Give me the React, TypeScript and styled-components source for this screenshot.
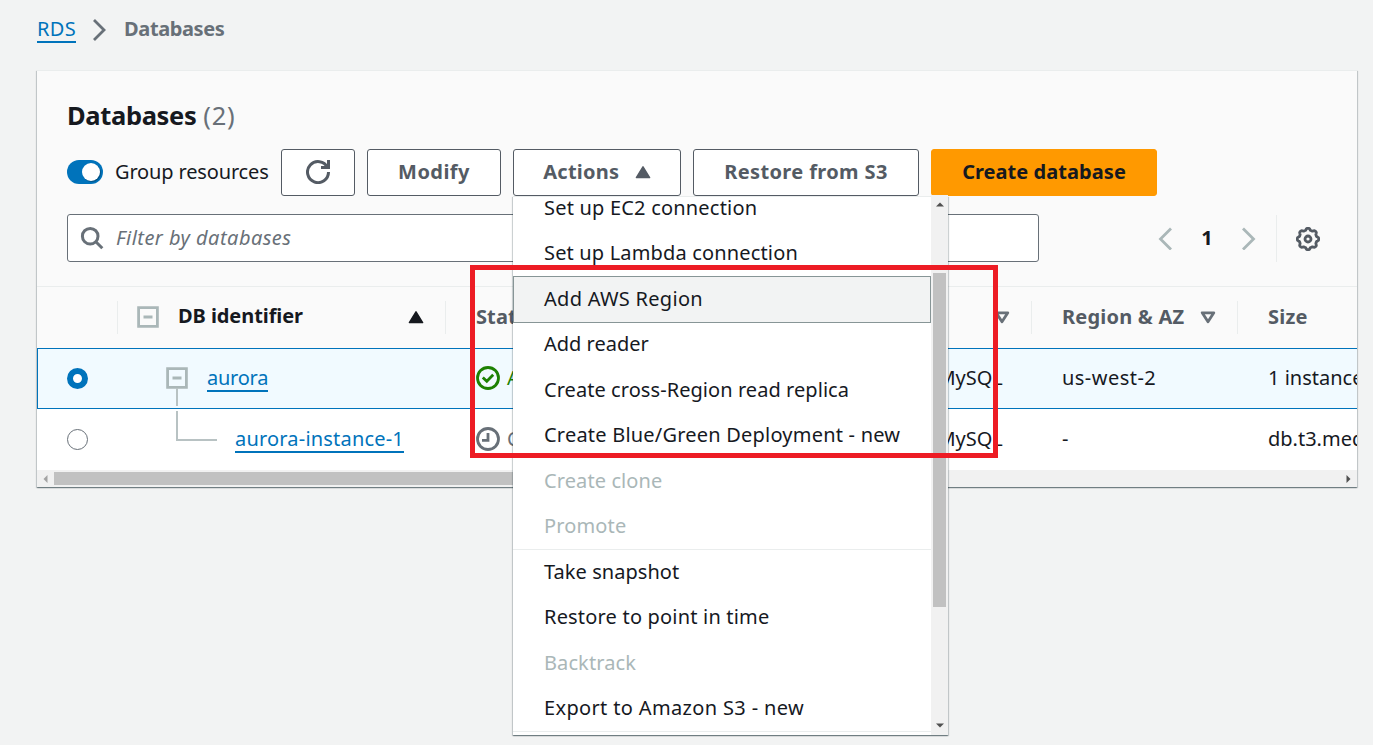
import React from "react";
import styled, { createGlobalStyle } from "styled-components";

const Global = createGlobalStyle`
  * { box-sizing: border-box; }
  body { margin: 0; background: #f2f3f3; overflow: hidden; }
  #root { font-family: "Noto Sans", "Open Sans", sans-serif; font-size: 20px; line-height: 30px; color: #16191f; }
`;

const cardShadow =
  "0 1px 1px 0 rgba(0, 28, 36, 0.36), 1px 1px 1px 0 rgba(0, 28, 36, 0.15), -1px 1px 1px 0 rgba(0, 28, 36, 0.15)";

const Page = styled.div`
  width: 1373px;
  height: 745px;
  padding: 14px 16px 0 37px;
  overflow: hidden;
`;

const Text = styled.span<{ $ls?: number }>`
  letter-spacing: ${(p) => p.$ls ?? 0}px;
  white-space: nowrap;
`;

const Breadcrumbs = styled.nav`
  display: flex;
  align-items: center;
  height: 30px;
  margin-bottom: 26px;
`;

const Link = styled.a<{ $ls?: number }>`
  color: #0073bb;
  height: 28px;
  line-height: 28px;
  border-bottom: 2px solid #0073bb;
  letter-spacing: ${(p) => p.$ls ?? 0}px;
  white-space: nowrap;
`;

const CrumbArrow = styled.svg`
  margin: 2px 18px 0 17px;
`;

const Current = styled(Text)`
  color: #687078;
  font-weight: 700;
`;

const Panel = styled.section`
  position: relative;
  height: 417px;
  border-top: 1px solid #eaeded;
  background: #fafafa;
  box-shadow: ${cardShadow};
`;

const PanelHead = styled.header`
  height: 215px;
  padding: 26px 30px 0;
`;

const Title = styled.h1`
  display: flex;
  gap: 7px;
  margin: 0;
  height: 36px;
  font-size: 25.5px;
  line-height: 36px;
  font-weight: 700;
`;

const Count = styled(Text)`
  color: #687078;
  font-weight: 400;
`;

const Toolbar = styled.div`
  display: flex;
  align-items: center;
  gap: 12px;
  height: 47px;
  margin-top: 16px;
`;

const Toggle = styled.div`
  display: flex;
  justify-content: flex-end;
  align-items: center;
  width: 36px;
  height: 24px;
  margin-bottom: 1px;
  padding: 0 3px;
  border-radius: 12px;
  background: #0073bb;
`;

const Knob = styled.i`
  width: 18px;
  height: 18px;
  border-radius: 50%;
  background: #fff;
  box-shadow: 1px 1px 1px rgba(0, 0, 0, 0.3);
`;

const ToggleLabel = styled(Text)`
  width: 154px;
  margin-bottom: 1px;
`;

const Button = styled.button<{ $width: number; $primary?: boolean; $ls?: number; $gap?: number }>`
  display: flex;
  align-items: center;
  justify-content: center;
  flex: none;
  gap: ${(p) => p.$gap ?? 0}px;
  width: ${(p) => p.$width}px;
  height: 47px;
  padding: 0 0 1px;
  border: 1px solid ${(p) => (p.$primary ? "#ff9900" : "#545b64")};
  border-radius: 3px;
  background: ${(p) => (p.$primary ? "#ff9900" : "#fff")};
  color: ${(p) => (p.$primary ? "#16191f" : "#545b64")};
  font: 700 20px/30px "Noto Sans", sans-serif;
  letter-spacing: ${(p) => p.$ls ?? 0}px;
  white-space: nowrap;
`;

const FilterBar = styled.div`
  display: flex;
  align-items: center;
  height: 48px;
  margin-top: 18px;
`;

const Search = styled.div`
  display: flex;
  align-items: center;
  gap: 12.5px;
  width: 972px;
  height: 48px;
  padding-left: 11.5px;
  border: 1px solid #687078;
  border-radius: 3px;
  background: #fff;
  color: #687078;
  font-style: italic;
`;

const Pager = styled.div`
  display: flex;
  align-items: center;
  justify-content: space-between;
  width: 98px;
  margin-left: 119px;
  font-weight: 700;
`;

const Settings = styled.div`
  display: flex;
  align-items: center;
  height: 47px;
  margin-left: 20px;
  padding: 2px 0 0 19px;
  border-left: 1px solid #eaeded;
`;

const Table = styled.div`
  overflow: hidden;
  height: 184px;
`;

const Row = styled.div<{ $selected?: boolean }>`
  display: grid;
  grid-template-columns: 80px 328px 401px 185px 206px 240px;
  align-items: center;
  width: 1440px;
  height: 61px;
  background: #fff;
  ${(p) => p.$selected && "background: #f1faff; box-shadow: inset 0 0 0 1px #0073bb;"}
`;

const HeadRow = styled(Row)`
  height: 62px;
  border-top: 1px solid #eaeded;
  background: #fafafa;
  color: #545b64;
  font-weight: 700;
`;

const Cell = styled.div<{ $pad?: number; $gap?: number }>`
  display: flex;
  align-items: center;
  gap: ${(p) => p.$gap ?? 0}px;
  height: 100%;
  padding: 0 0 1px ${(p) => p.$pad ?? 31}px;
`;

const SelectCell = styled(Cell)`
  padding: 0 0 0 30px;
`;

const HeadCell = styled(Cell)<{ $sorted?: boolean }>`
  height: 33px;
  padding-left: ${(p) => p.$pad ?? 30}px;
  border-left: 1px solid #eaeded;
  ${(p) => p.$sorted && "color: #16191f; padding-right: 21px;"}
`;

const SortedText = styled(Text)`
  margin-bottom: 2px;
`;

const BlankHead = styled.div``;

const Push = styled.span<{ $right?: number }>`
  margin-left: auto;
  margin-right: ${(p) => p.$right ?? 0}px;
  display: flex;
`;

const Radio = styled.i<{ $on?: boolean }>`
  width: 21px;
  height: 21px;
  border-radius: 50%;
  background: #fff;
  border: ${(p) => (p.$on ? "6.5px solid #0073bb" : "1.5px solid #687078")};
`;

const Status = styled(Text)<{ $tone: string }>`
  color: ${(p) => p.$tone};
`;

const HScroll = styled.div`
  display: flex;
  align-items: center;
  justify-content: space-between;
  height: 17px;
  padding: 0 6px;
  background: #f1f1f1;
`;

const HThumb = styled.div`
  width: 760px;
  height: 13px;
  margin: 0 auto 0 6px;
  background: #c1c1c1;
`;

const Menu = styled.div`
  position: absolute;
  left: 513px;
  top: 196px;
  display: flex;
  width: 435px;
  height: 539px;
  background: #fff;
  box-shadow: ${cardShadow};
`;

const MenuList = styled.div`
  width: 418px;
  height: 539px;
  overflow: hidden;
  border-top: 1px solid #eaeded;
`;

const MenuItems = styled.div`
  margin-top: -12px;
`;

const MenuItem = styled.div<{ $disabled?: boolean; $active?: boolean; $divided?: boolean; $ls?: number }>`
  display: flex;
  align-items: center;
  height: 45.5px;
  padding-left: 31px;
  white-space: nowrap;
  color: ${(p) => (p.$disabled ? "#aab7b8" : "#16191f")};
  letter-spacing: ${(p) => p.$ls ?? 0}px;
  ${(p) => p.$divided && "box-shadow: 0 1px 0 #eaeded;"}
  ${(p) => p.$active && "height: 47px; margin-bottom: -1.5px; background: #f2f3f3; border: 1px solid #879596; padding: 0 0 2px 30px;"}
`;

const VScroll = styled.div`
  display: flex;
  flex-direction: column;
  align-items: center;
  width: 17px;
  height: 540px;
  margin-top: -1px;
  padding: 7px 0;
  background: #f1f1f1;
`;

const VThumb = styled.div`
  width: 13px;
  height: 334px;
  margin: 66px 0 auto;
  background: #c1c1c1;
`;

const Highlight = styled.div`
  position: absolute;
  left: 470px;
  top: 265px;
  width: 528px;
  height: 193px;
  border: 5px solid #ed1c24;
`;

const Chevron = ({ flip }: { flip?: boolean }) => (
  <svg width="14" height="24" viewBox="0 0 14 24" fill="none" stroke="#aab7b8" strokeWidth="2.8">
    <path d={flip ? "M1 2.5 11.5 13 1 23.5" : "M13 2.5 2.5 13 13 23.5"} />
  </svg>
);

const CaretUp = () => (
  <svg width="16" height="14" viewBox="0 0 16 14" fill="currentColor" stroke="currentColor" strokeWidth="1.5" strokeLinejoin="round">
    <path d="M8 1.8 14.6 12.6H1.4z" />
  </svg>
);

const CaretDown = () => (
  <svg width="16" height="14" viewBox="0 0 16 14" fill="none" stroke="#687078" strokeWidth="2.8" strokeLinejoin="round">
    <path d="M2.2 2.8H13.8L8 11.8z" />
  </svg>
);

const Collapse = () => (
  <svg width="22" height="22" viewBox="0 0 22 22" fill="none" stroke="#aab7b8" strokeWidth="2.8">
    <path d="M1.6 1.6H20.4V20.4H1.6zM6.5 11H15.5" />
  </svg>
);

const Refresh = () => (
  <svg width="24" height="24" viewBox="0 0 16 16" fill="none" stroke="currentColor" strokeWidth="2">
    <path d="M10 5h5V0M15 8a7 7 0 1 1-.7-3" />
  </svg>
);

const Magnifier = () => (
  <svg width="24" height="24" viewBox="0 0 24 24" fill="none" stroke="#687078" strokeWidth="3">
    <circle cx="10.2" cy="10.2" r="7.8" />
    <path d="M15.8 15.8 22.3 22.3" />
  </svg>
);

// Eight rounded teeth, one every 45 degrees around the hub.
const gearPath = (() => {
  const steps = 96;
  const pts: string[] = [];
  for (let i = 0; i < steps; i++) {
    const a = (i / steps) * 2 * Math.PI;
    const r = 9.8 + 0.95 * Math.tanh(2 * Math.cos(8 * a));
    pts.push(`${(12 + r * Math.cos(a)).toFixed(2)} ${(12 + r * Math.sin(a)).toFixed(2)}`);
  }
  return `M${pts.join("L")}Z`;
})();

const Gear = () => (
  <svg width="24" height="24" viewBox="0 0 24 24" fill="none" stroke="#545b64" strokeWidth="2.8" strokeLinejoin="round">
    <path d={gearPath} />
    <circle cx="12" cy="12" r="3" />
  </svg>
);

const CheckCircle = () => (
  <svg width="24" height="24" viewBox="0 0 24 24" fill="none" stroke="#1d8102" strokeWidth="2.8">
    <circle cx="12" cy="12" r="10.5" />
    <path d="M6.8 11.5 10.8 15.3 17.2 8.8" />
  </svg>
);

const ClockCircle = () => (
  <svg width="24" height="24" viewBox="0 0 24 24" fill="none" stroke="#687078" strokeWidth="2.8">
    <circle cx="12" cy="12" r="10.5" />
    <path d="M12 6V13.3H6" />
  </svg>
);

const TreeStem = styled.svg`
  position: absolute;
  left: 139px;
  top: 315px;
`;

const items: { label: string; ls: number; disabled?: boolean; active?: boolean; divided?: boolean }[] = [
  { label: "Set up EC2 connection", ls: 0.2 },
  { label: "Set up Lambda connection", ls: 0.16 },
  { label: "Add AWS Region", ls: 0.28, active: true },
  { label: "Add reader", ls: 0 },
  { label: "Create cross-Region read replica", ls: 0.06 },
  { label: "Create Blue/Green Deployment - new", ls: 0.21 },
  { label: "Create clone", ls: 0.1, disabled: true },
  { label: "Promote", ls: 0.15, disabled: true, divided: true },
  { label: "Take snapshot", ls: 0.05 },
  { label: "Restore to point in time", ls: 0.19 },
  { label: "Backtrack", ls: 0.1, disabled: true },
  { label: "Export to Amazon S3 - new", ls: 0.35, divided: true },
];

export default function App() {
  return (
    <Page>
      <Global />
      <Breadcrumbs>
        <Link $ls={0.35}>RDS</Link>
        <CrumbArrow width="13" height="22" viewBox="0 0 13 22" fill="none" stroke="#687078" strokeWidth="2.8">
          <path d="M1 1 11 11 1 21" />
        </CrumbArrow>
        <Current $ls={-0.4}>Databases</Current>
      </Breadcrumbs>
      <Panel>
        <PanelHead>
          <Title>
            <Text $ls={-0.35}>Databases</Text>
            <Count $ls={0.7}>(2)</Count>
          </Title>
          <Toolbar>
            <Toggle><Knob /></Toggle>
            <ToggleLabel $ls={-0.15}>Group resources</ToggleLabel>
            <Button $width={74}><Refresh /></Button>
            <Button $width={134} $ls={0.45}>Modify</Button>
            <Button $width={168} $ls={0.22} $gap={15.5}>Actions <CaretUp /></Button>
            <Button $width={226} $ls={0.38}>Restore from S3</Button>
            <Button $width={226} $primary $ls={0.05}>Create database</Button>
          </Toolbar>
          <FilterBar>
            <Search>
              <Magnifier />
              <Text $ls={0.47}>Filter by databases</Text>
            </Search>
            <Pager>
              <Chevron />
              <Text>1</Text>
              <Chevron flip />
            </Pager>
            <Settings><Gear /></Settings>
          </FilterBar>
        </PanelHead>
        <Table>
          <HeadRow>
            <BlankHead />
            <HeadCell $pad={19} $gap={19} $sorted>
              <Collapse />
              <SortedText $ls={-0.08}>DB identifier</SortedText>
              <Push><CaretUp /></Push>
            </HeadCell>
            <HeadCell><Text $ls={0.1}>Status</Text></HeadCell>
            <Cell><Push $right={21}><CaretDown /></Push></Cell>
            <HeadCell $gap={16}><Text $ls={0.2}>Region &amp; AZ</Text><CaretDown /></HeadCell>
            <HeadCell><Text $ls={0.2}>Size</Text></HeadCell>
          </HeadRow>
          <Row $selected>
            <SelectCell><Radio $on /></SelectCell>
            <Cell $pad={49} $gap={19}><Collapse /><Link $ls={-0.25}>aurora</Link></Cell>
            <Cell $gap={7}><CheckCircle /><Status $tone="#1d8102">Available</Status></Cell>
            <Cell $pad={22}><Text>Aurora MySQL</Text></Cell>
            <Cell><Text $ls={0.46}>us-west-2</Text></Cell>
            <Cell><Text>1 instance</Text></Cell>
          </Row>
          <Row>
            <SelectCell><Radio /></SelectCell>
            <Cell $pad={118}><Link $ls={0.19}>aurora-instance-1</Link></Cell>
            <Cell $gap={7}><ClockCircle /><Status $tone="#687078">Creating</Status></Cell>
            <Cell $pad={22}><Text>Aurora MySQL</Text></Cell>
            <Cell><Text>-</Text></Cell>
            <Cell><Text>db.t3.medium</Text></Cell>
          </Row>
        </Table>
        <HScroll>
          <svg width="5" height="8" viewBox="0 0 5 8"><path d="M4.5 0V8L.5 4z" fill="#a3a3a3" /></svg>
          <HThumb />
          <svg width="5" height="8" viewBox="0 0 5 8"><path d="M.5 0V8L4.5 4z" fill="#505050" /></svg>
        </HScroll>
        <TreeStem width="42" height="56" viewBox="0 0 42 56" fill="none" stroke="#b8c2c3" strokeWidth="2">
          <path d="M1 2V20M1 25V54H41" />
        </TreeStem>
      </Panel>
      <Menu>
        <MenuList>
          <MenuItems>
            {items.map((i) => (
              <MenuItem key={i.label} $ls={i.ls} $disabled={i.disabled} $active={i.active} $divided={i.divided}>
                {i.label}
              </MenuItem>
            ))}
          </MenuItems>
        </MenuList>
        <VScroll>
          <svg width="8" height="5" viewBox="0 0 8 5"><path d="M0 4.5H8L4 .5z" fill="#505050" /></svg>
          <VThumb />
          <svg width="8" height="5" viewBox="0 0 8 5"><path d="M0 .5H8L4 4.5z" fill="#505050" /></svg>
        </VScroll>
      </Menu>
      <Highlight />
    </Page>
  );
}
